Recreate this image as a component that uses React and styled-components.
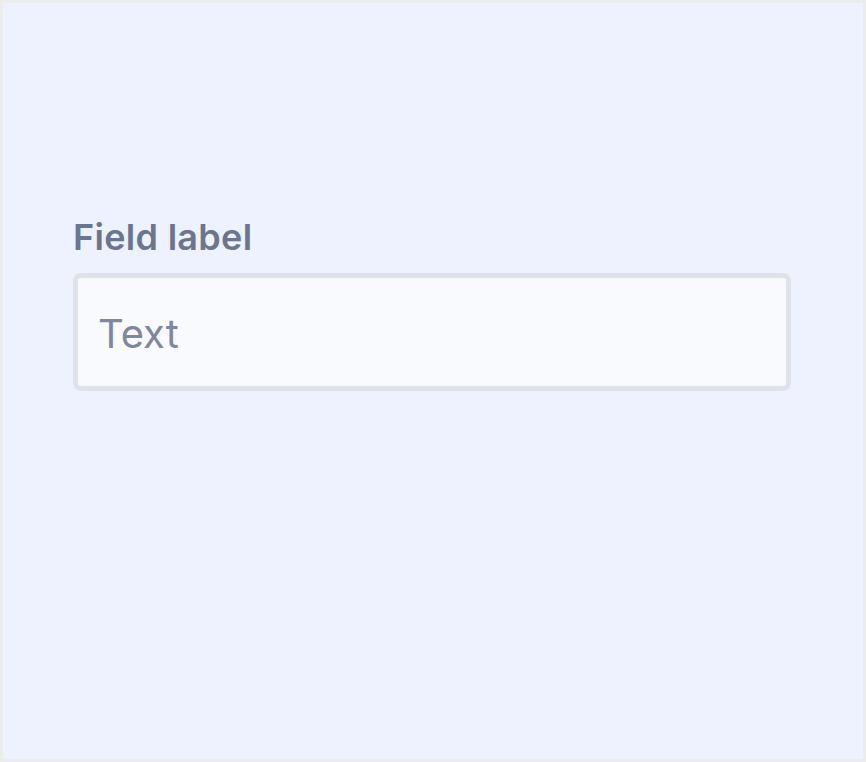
import React from "react";
import styled, { createGlobalStyle } from "styled-components";

const GlobalStyle = createGlobalStyle`
  html, body {
    margin: 0;
    padding: 0;
  }
  body {
    font-family: Inter, "Noto Sans", sans-serif;
    background: #ededed;
  }
`;

const Page = styled.div`
  box-sizing: border-box;
  width: 866px;
  height: 762px;
  border: 3px solid #ececec;
  background: #eef1fe;
  padding: 212px 72px 0 70px;
`;

const Field = styled.div`
  display: flex;
  flex-direction: column;
`;

const Label = styled.label`
  font-size: 36px;
  line-height: 44px;
  font-weight: 600;
  letter-spacing: 0.3px;
  color: #6a7590;
  margin-bottom: 14px;
`;

const Input = styled.input`
  box-sizing: border-box;
  width: 100%;
  height: 118px;
  border: 5px solid #e0e2ea;
  border-radius: 8px;
  background: #f9fafe;
  padding: 3px 20px 0;
  font-family: Inter, "Noto Sans", sans-serif;
  font-size: 40px;
  color: #7d879f;
  outline: none;

  &::placeholder {
    color: #7d879f;
  }
`;

export default function App() {
  return (
    <>
      <GlobalStyle />
      <Page>
        <Field>
          <Label htmlFor="field">Field label</Label>
          <Input id="field" placeholder="Text" />
        </Field>
      </Page>
    </>
  );
}
